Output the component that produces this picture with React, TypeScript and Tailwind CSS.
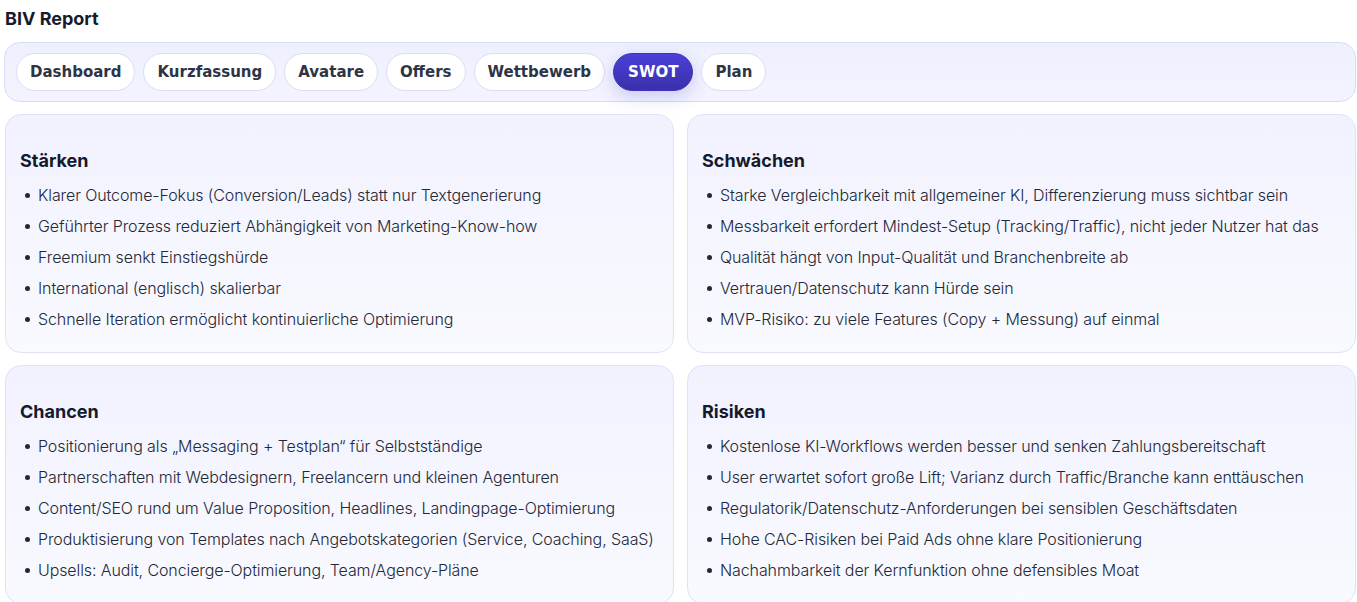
import React from "react";

const tabs = ["Dashboard", "Kurzfassung", "Avatare", "Offers", "Wettbewerb", "SWOT", "Plan"];

const sections = [
  {
    title: "Stärken",
    items: [
      "Klarer Outcome-Fokus (Conversion/Leads) statt nur Textgenerierung",
      "Geführter Prozess reduziert Abhängigkeit von Marketing-Know-how",
      "Freemium senkt Einstiegshürde",
      "International (englisch) skalierbar",
      "Schnelle Iteration ermöglicht kontinuierliche Optimierung",
    ],
  },
  {
    title: "Schwächen",
    items: [
      "Starke Vergleichbarkeit mit allgemeiner KI, Differenzierung muss sichtbar sein",
      "Messbarkeit erfordert Mindest-Setup (Tracking/Traffic), nicht jeder Nutzer hat das",
      "Qualität hängt von Input-Qualität und Branchenbreite ab",
      "Vertrauen/Datenschutz kann Hürde sein",
      "MVP-Risiko: zu viele Features (Copy + Messung) auf einmal",
    ],
  },
  {
    title: "Chancen",
    items: [
      "Positionierung als „Messaging + Testplan“ für Selbstständige",
      "Partnerschaften mit Webdesignern, Freelancern und kleinen Agenturen",
      "Content/SEO rund um Value Proposition, Headlines, Landingpage-Optimierung",
      "Produktisierung von Templates nach Angebotskategorien (Service, Coaching, SaaS)",
      "Upsells: Audit, Concierge-Optimierung, Team/Agency-Pläne",
    ],
  },
  {
    title: "Risiken",
    items: [
      "Kostenlose KI-Workflows werden besser und senken Zahlungsbereitschaft",
      "User erwartet sofort große Lift; Varianz durch Traffic/Branche kann enttäuschen",
      "Regulatorik/Datenschutz-Anforderungen bei sensiblen Geschäftsdaten",
      "Hohe CAC-Risiken bei Paid Ads ohne klare Positionierung",
      "Nachahmbarkeit der Kernfunktion ohne defensibles Moat",
    ],
  },
];

const App = () => {
  return (
    <div className="min-h-screen bg-white pl-[4px] pr-px pt-[7px] font-['Inter',sans-serif] text-[#111827]">
      <h1 className="pl-px text-[18px] font-bold leading-[24px] text-[#161b2e]">BIV Report</h1>

      <div className="mt-[11px] flex items-center gap-[8px] rounded-[16px] border border-[#d9dbf7] bg-gradient-to-b from-[#eef0fe] to-[#f3f4ff] px-[11px] py-[10px]">
        {tabs.map((tab) => (
          <button
            key={tab}
            className={
              tab === "SWOT"
                ? "h-[38px] rounded-full border border-[#3b33b8] bg-gradient-to-b from-[#4a40d8] to-[#3a30aa] px-[14px] font-['DejaVu_Sans',sans-serif] text-[15px] font-bold text-white shadow-[0_6px_18px_rgba(67,56,202,0.22)]"
                : "h-[38px] rounded-full border border-[#dcdcf5] bg-white px-[13px] font-['DejaVu_Sans',sans-serif] text-[15px] font-bold text-[#2d3446]"
            }
          >
            {tab}
          </button>
        ))}
      </div>

      <div className="mt-[12px] grid grid-cols-2 gap-x-[13px] gap-y-[12px] pl-px">
        {sections.map((s) => (
          <div
            key={s.title}
            className="rounded-[16px] border border-[#e1e2f8] bg-gradient-to-b from-[#f1f2fe] to-[#f9f9ff] px-[14px] pb-[22px] pt-[35px]"
          >
            <h2 className="text-[18px] font-bold leading-[22px] text-[#141a2c]">{s.title}</h2>
            <ul className="mt-[12px] flex flex-col gap-[9px]">
              {s.items.map((item) => (
                <li
                  key={item}
                  className="flex items-center whitespace-nowrap text-[16px] font-light leading-[22px] tracking-[-0.1px] text-[#232838]"
                >
                  <span className="ml-[5px] mr-[8px] h-[5px] w-[5px] shrink-0 rounded-full bg-[#232838]" />
                  {item}
                </li>
              ))}
            </ul>
          </div>
        ))}
      </div>
    </div>
  );
};

export default App;
